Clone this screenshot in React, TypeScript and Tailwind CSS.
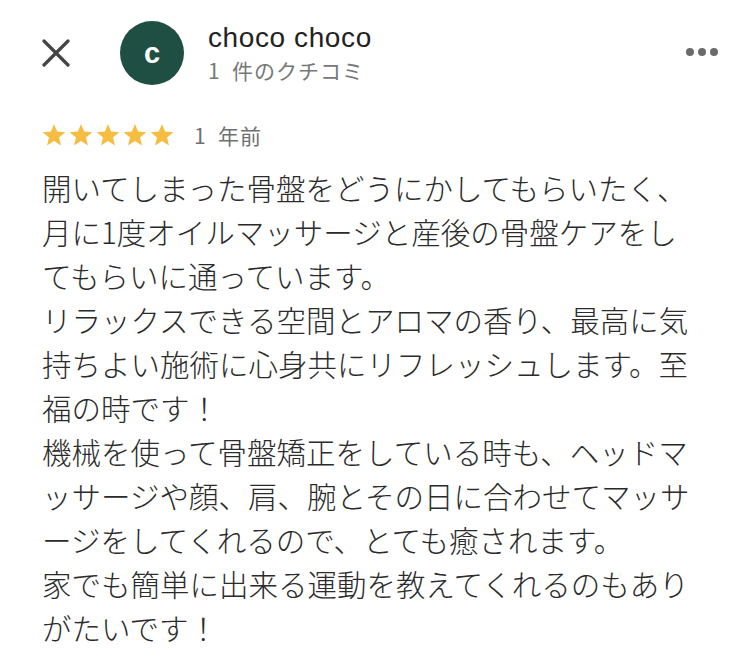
const lines = [
  "開いてしまった骨盤をどうにかしてもらいたく、",
  "月に1度オイルマッサージと産後の骨盤ケアをし",
  "てもらいに通っています。",
  "リラックスできる空間とアロマの香り、最高に気",
  "持ちよい施術に心身共にリフレッシュします。至",
  "福の時です！",
  "機械を使って骨盤矯正をしている時も、ヘッドマ",
  "ッサージや顔、肩、腕とその日に合わせてマッサ",
  "ージをしてくれるので、とても癒されます。",
  "家でも簡単に出来る運動を教えてくれるのもあり",
  "がたいです！",
];

const Star = () => (
  <svg width="24" height="24" viewBox="0 0 24 24">
    <polygon
      points="12,1 15.1,8.6 23.3,9.2 17,14.5 19,22.5 12,18.1 5,22.5 7,14.5 0.7,9.2 8.9,8.6"
      fill="#f5bd41"
    />
  </svg>
);

export default function App() {
  return (
    <div
      className="w-[750px] h-[663px] bg-white overflow-hidden pl-[42px] pr-[32px] pt-[21px]"
      style={{ fontFamily: '"Liberation Sans", "Noto Sans CJK JP", sans-serif' }}
    >
      {/* header */}
      <div className="flex items-center h-16">
        <svg width="28" height="28" viewBox="0 0 28 28" className="shrink-0">
          <path d="M2 2 L26 26 M26 2 L2 26" stroke="#444" strokeWidth="3.2" strokeLinecap="round" />
        </svg>
        <div className="ml-[50px] w-16 h-16 rounded-full bg-[#1f4f42] flex items-center justify-center shrink-0">
          <span className="text-white text-[29px] font-bold leading-none">c</span>
        </div>
        <div className="ml-6 flex-1">
          <div className="text-[28px] leading-[34px] text-[#222] tracking-[0.6px]">choco choco</div>
          <div
            className="text-[21px] leading-[30px] text-[#777] tracking-[1px]"
            style={{ fontFamily: '"Noto Sans CJK JP", sans-serif' }}
          >
            1&nbsp;&nbsp;件のクチコミ
          </div>
        </div>
        <div className="flex gap-[4px] pb-[2px]">
          <span className="w-2 h-2 rounded-full bg-[#6b6b6b]" />
          <span className="w-2 h-2 rounded-full bg-[#6b6b6b]" />
          <span className="w-2 h-2 rounded-full bg-[#6b6b6b]" />
        </div>
      </div>

      {/* rating */}
      <div className="flex items-center mt-[38px] h-6">
        <div className="flex gap-[3px]">
          <Star />
          <Star />
          <Star />
          <Star />
          <Star />
        </div>
        <span
          className="ml-[20px] text-[21px] text-[#707070] leading-none tracking-[1px]"
          style={{ fontFamily: '"Noto Sans CJK JP", sans-serif' }}
        >
          1&nbsp;&nbsp;年前
        </span>
      </div>

      {/* body */}
      <div
        className="mt-[18px] text-[29.5px] leading-[44px] text-[#2b2b2b] font-light"
        style={{ fontFamily: '"Noto Sans CJK JP", sans-serif' }}
      >
        {lines.map((l, i) => (
          <div key={i} className="whitespace-nowrap">
            {l}
          </div>
        ))}
      </div>
    </div>
  );
}
